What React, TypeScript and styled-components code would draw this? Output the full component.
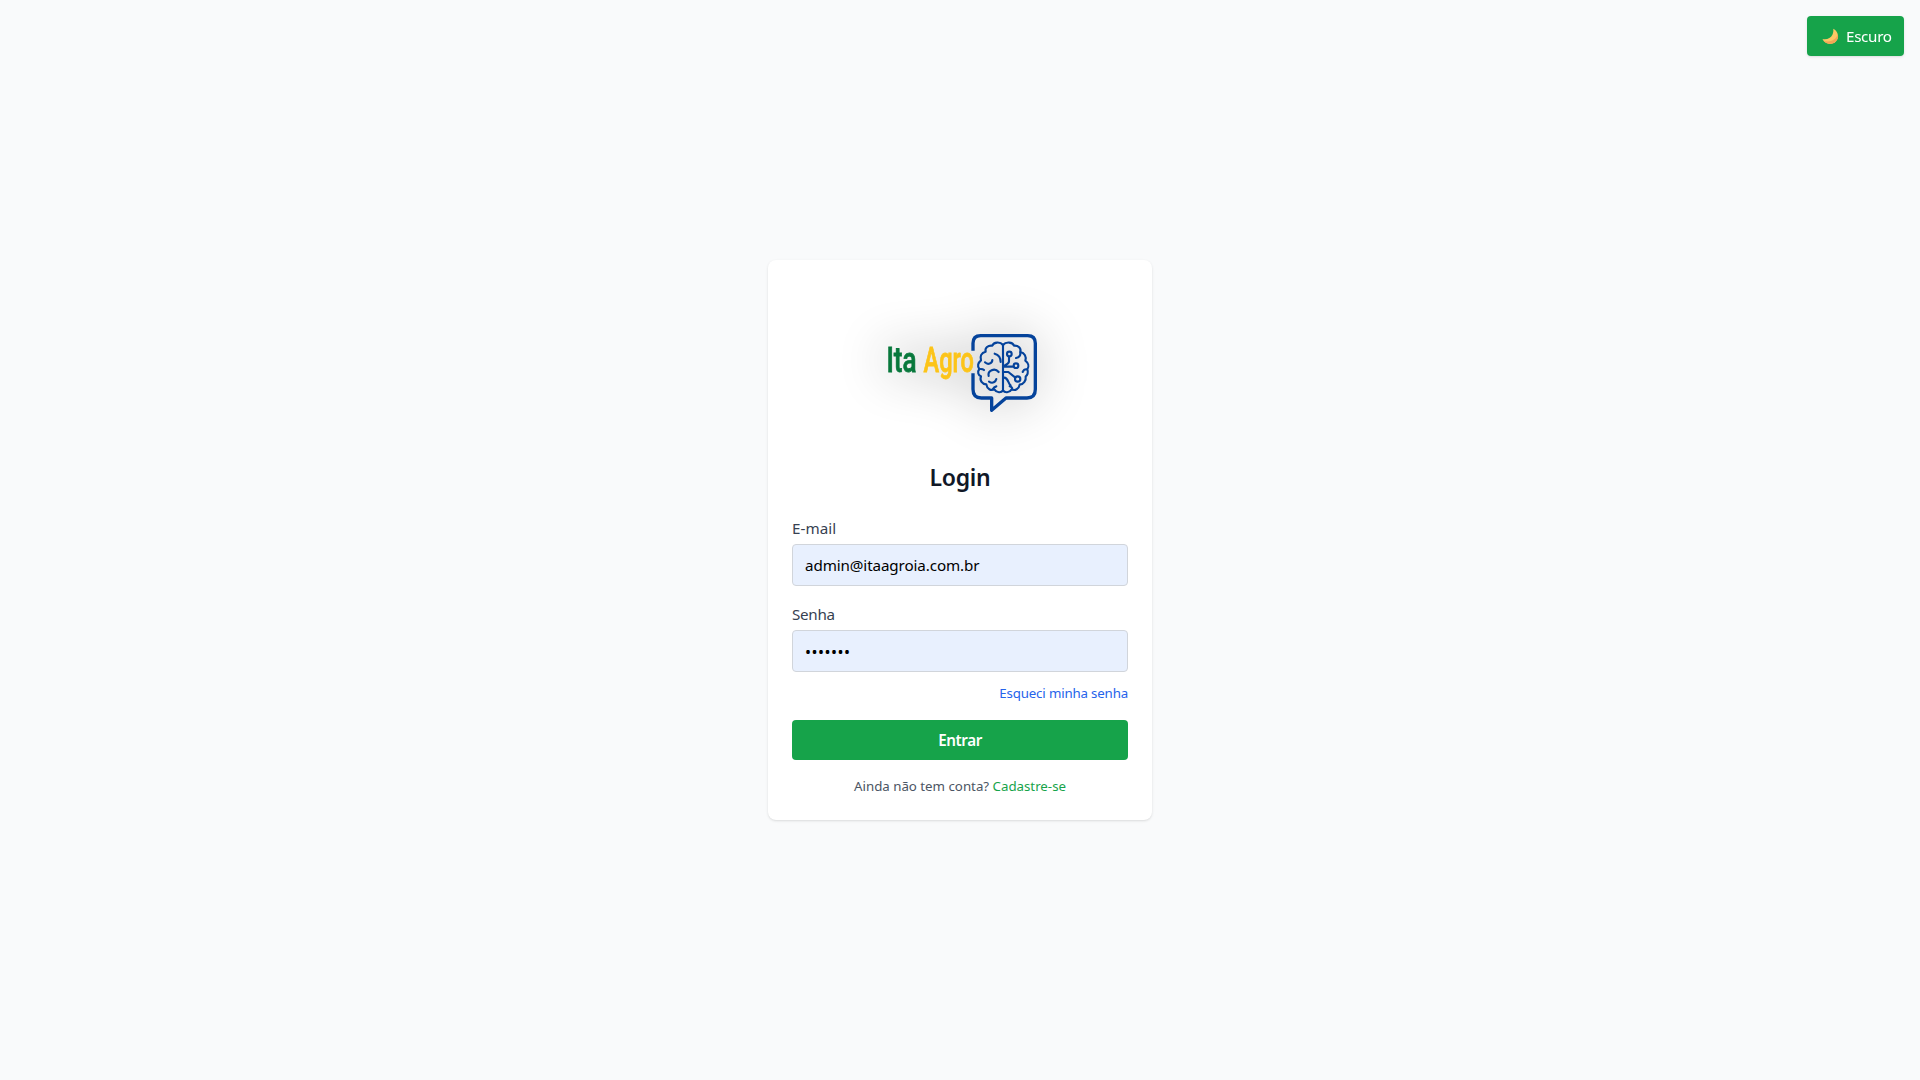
import React, { useState } from "react";
import styled, { createGlobalStyle } from "styled-components";

const GlobalStyle = createGlobalStyle`
  *, *::before, *::after { box-sizing: border-box; }
  body {
    margin: 0;
    background: #f9fafb;
    font-family: "Segoe UI", "Noto Sans", "Open Sans", sans-serif;
    font-size: 15.2px;
    line-height: 24px;
  }
  button, input { font: inherit; }
`;

const Page = styled.main`
  display: flex;
  align-items: center;
  justify-content: center;
  min-height: 100vh;
  background: #f9fafb;
`;

const ThemeButton = styled.button`
  position: fixed;
  top: 16px;
  right: 16px;
  display: flex;
  align-items: center;
  gap: 7px;
  width: 97px;
  height: 40px;
  padding: 0 0 0 15px;
  border: 0;
  border-radius: 4px;
  background: #16a34a;
  color: #fff;
  white-space: nowrap;
  box-shadow: 0 1px 3px rgba(0, 0, 0, 0.1), 0 1px 2px -1px rgba(0, 0, 0, 0.1);
`;

const Card = styled.section`
  width: 384px;
  padding: 24px;
  border-radius: 8px;
  background: #fff;
  box-shadow: 0 1px 3px rgba(0, 0, 0, 0.1), 0 1px 2px -1px rgba(0, 0, 0, 0.1);
`;

const Logo = styled.svg`
  display: block;
  width: 160px;
  height: 160px;
  margin: 0 auto 16px;
  overflow: visible;
  filter: drop-shadow(0 0 25px rgba(0, 0, 0, 0.46));
`;

const LogoWord = styled.text`
  font-family: Roboto, sans-serif;
  font-size: 36px;
  font-weight: 500;
  stroke-width: 0.8px;
`;

const Text = styled.span<{ $spacing?: number }>`
  letter-spacing: ${(p) => p.$spacing ?? 0}px;
`;

const Title = styled.h1`
  margin: 0 0 24px;
  padding-top: 1px;
  height: 32px;
  color: #111827;
  font-size: 23px;
  font-weight: 600;
  line-height: 32px;
  text-align: center;
`;

const Field = styled.div`
  margin-bottom: 16px;
`;

const Label = styled.label`
  display: block;
  margin-bottom: 4px;
  color: #374151;
`;

const Input = styled.input<{ $spacing: number; $size?: number }>`
  display: block;
  width: 100%;
  height: 42px;
  padding: ${(p) => (p.$size ? "9px 12px 8px" : "8px 12px 9px")};
  border: 1px solid #d1d5db;
  border-radius: 4px;
  outline: none;
  background: #e8f0fe;
  color: #000;
  font-size: ${(p) => p.$size ?? 15.2}px;
  letter-spacing: ${(p) => p.$spacing}px;
`;

const ForgotRow = styled.div`
  height: 24px;
  margin: -8px 0 16px;
  text-align: right;
`;

const Link = styled.a<{ $color: string }>`
  color: ${(p) => p.$color};
  font-size: 13.3px;
  text-decoration: none;
`;

const Submit = styled.button`
  display: block;
  width: 100%;
  height: 40px;
  padding: 0;
  border: 0;
  border-radius: 4px;
  background: #16a34a;
  color: #fff;
  font-weight: 600;
`;

const Footer = styled.p`
  margin: 16px 0 0;
  color: #4b5563;
  font-size: 13.3px;
  line-height: 20px;
  text-align: center;
  white-space: nowrap;
`;

const Moon = () => (
  <svg width="17" height="17" viewBox="0 0 17 17">
    <path d="M11.200.8C15 2.400 17 7 15.500 11c-1.700 4.200-6.300 6-10.500 4.300C2.800 14.400 1.100 12.900.5 11c4.300.8 8.200-.6 9.900-4.200.9-2 1.200-4 .8-6z" fill="#fbc865" />
    <path d="M15.800 6.500c.5 1.500.4 3-.3 4.500-1.700 4.200-6.300 6-10.500 4.300-1.600-.6-2.900-1.600-3.700-2.800 5.900 2.300 12.200 0 14.500-6z" fill="#f4a656" />
  </svg>
);

const Brand = () => (
  <Logo viewBox="0 0 160 160" role="img" aria-label="Ita Agro">
    <LogoWord transform="translate(6.400 88) scale(.725 1)" fill="#08783c" stroke="#08783c">Ita</LogoWord>
    <LogoWord transform="translate(43.500 88) scale(.655 1)" fill="#fcc419" stroke="#fcc419">Agro</LogoWord>
    <g transform="translate(80 41) scale(.33333)" fill="none" stroke="#05439b" strokeLinejoin="round">
      <path strokeWidth="10" d="M39 77V55Q39 32 62 32H203Q226 32 226 55V193Q226 219 201 219H138L95 256V219H64Q39 219 39 193V145" />
      <g strokeWidth="6.400" strokeLinecap="round">
        <path d="M129 59V197" />
        <path d="M129 60C120 49 101 51 97 62C84 60 74 69 77 80C64 83 59 94 63 106C54 113 51 124 58 132C51 141 55 152 63 154C58 166 67 178 79 178C81 192 93 198 103 193C110 204 124 204 129 196" />
        <path d="M129 60C138 49 158 51 162 62C175 61 184 70 181 81C194 84 200 95 196 107C205 114 208 125 202 133C206 142 202 151 197 154C199 166 191 178 179 179C177 192 165 198 155 193C148 204 134 204 129 196" />
        <path d="M104 86C115 89 122 99 122 111M75 112C84 121 97 115 97 105M86 153C82 137 104 127 116 141M87 170C98 177 107 171 109 162M62 132C66 132 69 132 72 135M99 192C101 187 104 185 109 184" />
        <path d="M168 99C178 97 182 91 181 82M201 133C195 132 190 136 188 141M157 193C157 188 153 185 149 184M147 96V109Q147 115 138 119L129 125H158M129 141H145L166 158M132 158C145 157 144 177 152 181" />
        <circle cx="148" cy="87" r="7" />
        <circle cx="168" cy="122" r="7" />
        <circle cx="173" cy="162" r="8" />
      </g>
    </g>
  </Logo>
);

export default function App() {
  const [email, setEmail] = useState("admin@itaagroia.com.br");
  const [password, setPassword] = useState("1234567");
  return (
    <>
      <GlobalStyle />
      <Page>
        <ThemeButton type="button">
          <Moon />
          <Text $spacing={-0.3}>Escuro</Text>
        </ThemeButton>
        <Card>
          <Brand />
          <Title><Text $spacing={-0.3}>Login</Text></Title>
          <Field>
            <Label htmlFor="email"><Text $spacing={0.05}>E-mail</Text></Label>
            <Input id="email" type="email" $spacing={-0.11} value={email} onChange={(e) => setEmail(e.target.value)} />
          </Field>
          <Field>
            <Label htmlFor="password"><Text $spacing={-0.3}>Senha</Text></Label>
            <Input id="password" type="password" $size={16} $spacing={0.5} value={password} onChange={(e) => setPassword(e.target.value)} />
          </Field>
          <ForgotRow>
            <Link href="#" $color="#2563eb"><Text $spacing={-0.17}>Esqueci minha senha</Text></Link>
          </ForgotRow>
          <Submit type="button"><Text $spacing={-0.4}>Entrar</Text></Submit>
          <Footer>
            <Text $spacing={-0.01}>Ainda não tem conta? <Link href="#" $color="#16a34a">Cadastre-se</Link></Text>
          </Footer>
        </Card>
      </Page>
    </>
  );
}
